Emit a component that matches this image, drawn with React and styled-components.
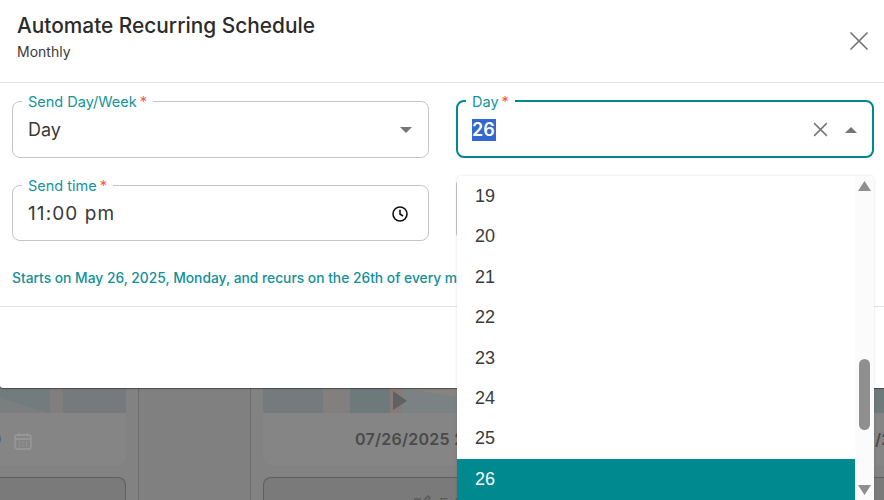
import React from 'react';
import styled, { createGlobalStyle } from 'styled-components';

const GlobalStyle = createGlobalStyle`
  html, body { margin: 0; padding: 0; height: 500px; overflow: hidden; background: #7f7f7f; }
  body { font-family: Inter, "Liberation Sans", sans-serif; }
  * { box-sizing: border-box; }
`;

const Page = styled.div`
  position: relative;
  width: 884px;
  height: 500px;
  overflow: hidden;
`;

const Dialog = styled.section`
  height: 388px;
  background: #fff;
  border-bottom-left-radius: 3px;
  box-shadow: 0 1px 1px rgba(0, 0, 0, 0.4);
  position: relative;
`;

const Header = styled.header`
  height: 83px;
  padding: 13px 15px 0 17px;
  display: flex;
  justify-content: space-between;
  border-bottom: 1px solid #e2e2e8;
`;

const Title = styled.h2`
  margin: 0;
  font-size: 20.85px;
  line-height: 26px;
  font-weight: 500;
  color: #2b2b2b;
`;

const Subtitle = styled.div`
  margin-top: 4px;
  font-size: 14px;
  line-height: 17px;
  color: #3a3a3a;
`;

const CloseButton = styled.button`
  border: 0;
  padding: 0;
  background: none;
  width: 20px;
  height: 20px;
  margin-top: 18px;
  color: #757575;
  display: flex;
`;

const Form = styled.div`
  padding: 10px 0 0 12px;
  display: grid;
  grid-template-columns: 417px 418px;
  grid-template-rows: 65px 64px;
  column-gap: 27px;
  row-gap: 19px;
`;

const Field = styled.fieldset`
  margin: 0;
  min-width: 0;
  height: 100%;
  padding: 0 ${(p) => p.$right || 15}px 6px ${(p) => (p.$focused ? 14 : 15)}px;
  border: ${(p) => (p.$focused ? '2px solid #00878f' : '1px solid #c4c4c4')};
  border-radius: 8px;
  display: flex;
  align-items: center;
  gap: 17px;
`;

const Legend = styled.legend`
  margin-left: -6px;
  padding: 2px 6px 0;
  font-size: 14.5px;
  line-height: 14px;
  color: #14939c;
  white-space: nowrap;
`;

const Required = styled.span`
  color: #f55;
  margin-left: 3px;
`;

const Value = styled.div`
  flex: 1;
  font-size: ${(p) => (p.$wide ? '19px' : '18px')};
  line-height: 22px;
  color: #3a3a3a;
  letter-spacing: ${(p) => (p.$wide ? '1.1px' : '0')};
`;

const Selected = styled.span`
  display: inline-block;
  background: #3367d1;
  color: #fff;
  font-weight: 600;
  width: 24px;
`;

const Caret = styled.svg`
  width: 12px;
  height: 6px;
  fill: #757575;
  display: block;
`;

const Note = styled.p`
  margin: 0;
  padding: 28px 12px 0;
  font-size: 13.8px;
  line-height: 18px;
  font-weight: 500;
  color: #12909a;
  white-space: nowrap;
  height: 66px;
  border-bottom: 1px solid #e2e2e8;
`;

/* cards repeat every 500px, the first one starts off the left edge */
const Behind = styled.div`
  display: grid;
  grid-template-columns: 363px 137px 363px 137px 363px;
  width: 1363px;
  height: 112px;
  margin-left: -237px;
  background: #828282;
`;

const Card = styled.div`
  display: flex;
  flex-direction: column;
`;

const Thumbnail = styled.svg`
  width: 363px;
  height: 25px;
  display: block;
`;

const DateRow = styled.div`
  height: 52px;
  border-radius: 0 0 8px 8px;
  background: #858585;
  display: flex;
  align-items: center;
  gap: 12px;
  padding-left: 92px;
  white-space: nowrap;
  font-size: 16px;
  font-weight: 600;
  letter-spacing: 0.25px;
  color: #4a4a4a;
`;

const Stamp = styled.span`
  width: 147px;
`;

const CalendarIcon = styled.svg`
  flex: none;
  width: 18px;
  height: 18px;
  margin-top: 4px;
  fill: none;
  stroke: #9a9a9a;
  stroke-width: 1.3;
`;

const ActionBox = styled.div`
  margin-top: 12px;
  flex: 1;
  min-height: 0;
  overflow: hidden;
  background: #7a7a7a;
  border: 1px solid #5f5f5f;
  border-bottom: 0;
  border-radius: 8px 8px 0 0;
  padding: 17px 0 0 149px;
  display: flex;
  align-items: flex-start;
  gap: 8px;
  font-size: 16px;
  line-height: 18px;
  color: #5a5a5a;
`;

const EditIcon = styled.svg`
  flex: none;
  width: 18px;
  height: 18px;
  fill: none;
  stroke: #5a5a5a;
  stroke-width: 1.5;
`;

const MiddleColumn = styled.div`
  margin: 0 12px;
  background: #808080;
  border-left: 1px solid #6c6c6c;
  border-right: 1px solid #6c6c6c;
`;

const Dropdown = styled.div`
  position: absolute;
  left: 457px;
  top: 176px;
  width: 417px;
  height: 324px;
  background: #fff;
  border-radius: 4px 4px 0 0;
  box-shadow: 0 0 3px rgba(0, 0, 0, 0.12);
  display: flex;
  overflow: hidden;
`;

const Options = styled.ul`
  list-style: none;
  margin: 0;
  padding: 0.2px 0 0;
  flex: 1;
`;

const Option = styled.li`
  height: 40.43px;
  padding-left: 18px;
  display: flex;
  align-items: center;
  font-family: "Liberation Sans", sans-serif;
  font-size: 18px;
  color: ${(p) => (p.$active ? '#fff' : '#3a3a3a')};
  background: ${(p) => (p.$active ? '#00898f' : 'transparent')};
`;

const Scrollbar = styled.div`
  width: 19px;
  background: #fbfbfb;
  display: flex;
  flex-direction: column;
  align-items: center;
  padding: 5px 0;
`;

const ScrollArrow = styled.svg`
  width: 13px;
  height: 10px;
  fill: #8f8f8f;
  display: block;
`;

const Thumb = styled.div`
  width: 11px;
  height: 71px;
  margin-top: 168px;
  margin-bottom: 55px;
  border-radius: 6px;
  background: #8f8f8f;
`;

const ClearButton = styled.span`
  color: #757575;
  display: flex;
`;

const ClockIcon = styled.svg`
  width: 18px;
  height: 18px;
  fill: none;
  stroke: #111;
  stroke-width: 1.6;
`;

const CloseIcon = ({ size, stroke }) => (
  <svg width={size} height={size} viewBox="0 0 20 20" fill="none" stroke="currentColor" strokeWidth={stroke}>
    <path d="M1.5 1.5L18.5 18.5M18.5 1.5L1.5 18.5" />
  </svg>
);

const ScheduleCard = () => (
  <Card>
    <Thumbnail viewBox="0 0 363 25">
      <rect width="363" height="25" fill="#6e797b" />
      <rect width="60" height="25" fill="#757a7c" />
      <rect x="60" width="27" height="25" fill="#847f7f" />
      <rect x="127" width="110" height="25" fill="#7a8284" />
      <path d="M127 0h12v25h-12z" fill="#8a7a77" />
      <path d="M130 3l14 10-14 9z" fill="#5e6264" />
      <path d="M139 0h98v16z" fill="#878381" />
      <path d="M237 0h50v25h-50z" fill="#727c7d" />
      <path d="M237 10l50 15h-50z" fill="#7a7e7e" />
      <rect x="287" width="13" height="25" fill="#837e7e" />
      <rect x="300" width="63" height="25" fill="#767a7c" />
    </Thumbnail>
    <DateRow>
      <Stamp>07/26/2025 22:00</Stamp>
      <CalendarIcon viewBox="0 0 18 18">
        <rect x="1" y="3" width="16" height="14" rx="2" />
        <path d="M1 7h16M5 1v3M13 1v3M5 10.5h1M8.5 10.5h1M12 10.5h1M5 13.5h1M8.5 13.5h1M12 13.5h1" />
      </CalendarIcon>
    </DateRow>
    <ActionBox>
      <EditIcon viewBox="0 0 18 18">
        <path d="M14 10v6H2V4h6M7 11l1-3 7-7 2 2-7 7z" />
      </EditIcon>
      Edit
    </ActionBox>
  </Card>
);

const days = [19, 20, 21, 22, 23, 24, 25, 26];

export default function App() {
  return (
    <Page>
      <GlobalStyle />
      <Dialog>
        <Header>
          <div>
            <Title>Automate Recurring Schedule</Title>
            <Subtitle>Monthly</Subtitle>
          </div>
          <CloseButton aria-label="Close">
            <CloseIcon size={20} stroke={1.7} />
          </CloseButton>
        </Header>
        <Form>
          <Field $right={16}>
            <Legend>Send Day/Week<Required>*</Required></Legend>
            <Value>Day</Value>
            <Caret viewBox="0 0 12 6"><path d="M0 0h12L6 6z" /></Caret>
          </Field>
          <Field $focused $right={15}>
            <Legend>Day<Required>*</Required></Legend>
            <Value><Selected>26</Selected></Value>
            <ClearButton><CloseIcon size={15} stroke={2} /></ClearButton>
            <Caret viewBox="0 0 12 6"><path d="M0 6h12L6 0z" /></Caret>
          </Field>
          <Field $right={19}>
            <Legend>Send time<Required>*</Required></Legend>
            <Value $wide>11:00 pm</Value>
            <ClockIcon viewBox="0 0 18 18">
              <circle cx="9" cy="9" r="7" />
              <path d="M9 4.8V9l3 2.2" />
            </ClockIcon>
          </Field>
          <Field />
        </Form>
        <Note>Starts on May 26, 2025, Monday, and recurs on the 26th of every month.</Note>
      </Dialog>
      <Behind>
        <ScheduleCard />
        <MiddleColumn />
        <ScheduleCard />
        <MiddleColumn />
        <ScheduleCard />
      </Behind>
      <Dropdown>
        <Options>
          {days.map((d) => (
            <Option key={d} $active={d === 26}>{d}</Option>
          ))}
        </Options>
        <Scrollbar>
          <ScrollArrow viewBox="0 0 13 10"><path d="M6.5 0L13 10H0z" /></ScrollArrow>
          <Thumb />
          <ScrollArrow viewBox="0 0 13 10"><path d="M0 0h13L6.5 10z" /></ScrollArrow>
        </Scrollbar>
      </Dropdown>
    </Page>
  );
}
